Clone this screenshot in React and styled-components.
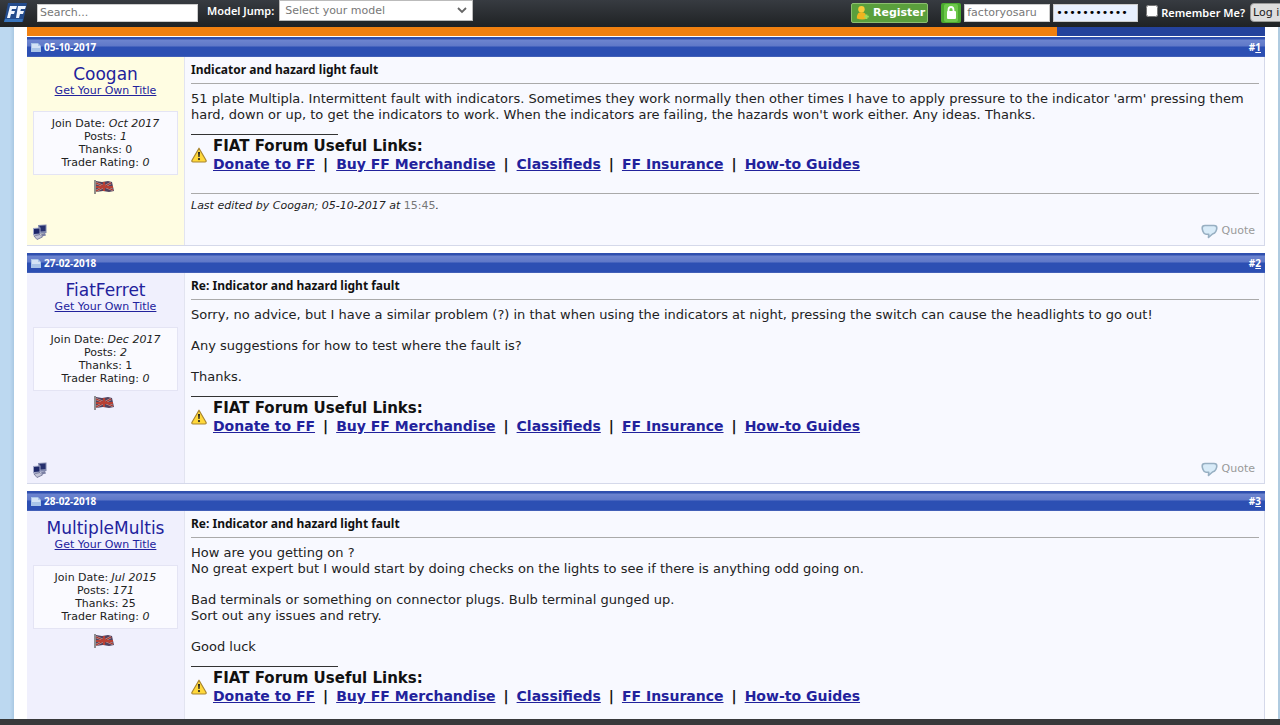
import React from "react";
import styled, { createGlobalStyle } from "styled-components";

const Global = createGlobalStyle`
  * { box-sizing: border-box; }
  body {
    margin: 0;
    background: #fff;
    color: #222;
    font: 13px/16px Verdana, "DejaVu Sans", sans-serif;
  }
  a { color: #22229c; }
`;

const Page = styled.div`
  display: flex;
  flex-direction: column;
  height: 100vh;
  overflow: hidden;
`;

const TopBar = styled.header`
  flex: none;
  display: flex;
  align-items: center;
  height: 27px;
  padding: 0 0 2px 4px;
  overflow: hidden;
  white-space: nowrap;
  background: linear-gradient(#373b41, #1f2224);
  color: #fff;
  font-size: 11px;
`;

const Logo = styled.a`
  display: block;
  width: 24px;
  height: 20px;
  margin-right: 9px;
`;

const TextBox = styled.input`
  flex: none;
  width: ${(p) => p.$width};
  height: 18px;
  border: 1px solid #ccc;
  padding: 0 2px;
  background: ${(p) => p.$fill || "#fff"};
  color: ${(p) => p.$ink || "#777"};
  font: 11px "DejaVu Sans", sans-serif;
  &::placeholder { color: #777; opacity: 1; }
`;

const BarLabel = styled.label`
  margin: 0 5px 3px 9px;
  font: 600 11px/16px "Noto Sans", sans-serif;
`;

const ModelField = styled.span`
  position: relative;
  display: flex;
  align-self: flex-start;
`;

const ModelSelect = styled.select`
  appearance: none;
  width: 194px;
  height: 21px;
  border: 1px solid #bbb;
  border-radius: 0;
  padding: 0 5px;
  background: #fff;
  color: #777;
  font: 11px "DejaVu Sans", sans-serif;
`;

const Chevron = styled.svg`
  position: absolute;
  right: 6px;
  top: 7px;
  pointer-events: none;
`;

const Account = styled.form`
  flex: none;
  display: flex;
  align-items: center;
  margin-left: auto;
  margin-right: -16px;
`;

const Credentials = styled.div`
  display: flex;
  gap: 3px;
`;

const Register = styled.button`
  display: flex;
  align-items: center;
  gap: 3px;
  width: 77px;
  height: 20px;
  margin-right: 13px;
  padding: 0 2px 0 3px;
  border: 1px solid #8cbf70;
  border-radius: 2px;
  background: #5a9f3c;
  color: #fff;
  font: bold 11px "DejaVu Sans", sans-serif;
`;

const Lock = styled.svg`
  margin-right: 3px;
`;

const Remember = styled.label`
  display: flex;
  align-items: center;
  gap: 3px;
  margin: 0 5px 0 8px;
  font: 600 11px/16px "Noto Sans", sans-serif;
  input { width: 12px; height: 12px; margin: 0 0 4px; }
`;

const LogIn = styled.button`
  width: 46px;
  height: 19px;
  padding: 0 2px;
  border: 1px solid #999;
  border-radius: 4px;
  background: #ddd;
  color: #222;
  font: 11px "DejaVu Sans", sans-serif;
  text-align: left;
`;

const Backdrop = styled.div`
  flex: 1;
  min-height: 0;
  overflow: hidden;
  display: flex;
  padding: 0 2px 0 14px;
  background: linear-gradient(90deg, #bcd8f0 0, #bcd8f0 10px, #a9c8e2 14px, #b0cbe0 100%);
`;

const Sheet = styled.main`
  flex: 1;
  padding: 0 13px;
  background: #fff;
`;

const Strip = styled.div`
  display: flex;
  height: 9px;
  margin-bottom: 1px;
  background: #24429c;
  &::before { content: ""; width: 83.2%; background: #f08010; }
`;

const PostBox = styled.article`
  margin-bottom: 7px;
`;

const PostHead = styled.header`
  display: flex;
  align-items: center;
  justify-content: space-between;
  height: 20px;
  padding: 0 4px;
  background: linear-gradient(#2f4fae 0, #2f4fae 2px, #6c84cf 3px, #5f78c8 9px, #2c4fb3 10px, #2c4fb3 19px, #5870bc 20px);
  color: #fff;
  font: bold 10px/16px "Noto Sans", sans-serif;
  a { color: #fff; }
`;

const Stamp = styled.span`
  display: flex;
  align-items: center;
  gap: 3px;
`;

const PostGrid = styled.div`
  display: grid;
  grid-template-columns: 158px 1fr;
  border: solid #d5d9ea;
  border-width: 0 1px 1px 0;
`;

const Author = styled.aside`
  display: flex;
  flex-direction: column;
  align-items: center;
  padding: 8px 6px 5px;
  background: ${(p) => (p.$starter ? "#fffde2" : "#f0f0fd")};
  border-right: 1px solid #e2e4f0;
  font-size: 11px;
  line-height: 13px;
`;

const AuthorName = styled.a`
  font-size: 17px;
  line-height: 19px;
  text-decoration: none;
`;

const Stats = styled.div`
  align-self: stretch;
  margin: 14px 0 5px;
  padding: 5px 0;
  border: 1px solid #e4e4f4;
  background: #fafaff;
  text-align: center;
`;

const FlagArt = styled.svg`
  margin-right: 3px;
`;

const Status = styled.svg`
  align-self: flex-start;
  margin-top: auto;
`;

const Body = styled.div`
  display: flex;
  flex-direction: column;
  padding: 5px 5px 0 6px;
  background: #f8f9ff;
`;

const Subject = styled.h2`
  margin: 0 0 7px;
  padding-bottom: 5px;
  border-bottom: 1px solid #aaa;
  font: bold 12px/16px "Noto Sans", sans-serif;
  color: #111;
`;

const Para = styled.p`
  margin: 0 0 15px;
  &:last-of-type { margin: 0; }
`;

const Signature = styled.div`
  display: flex;
  align-items: center;
  gap: 6px;
  margin-bottom: 20px;
  font: bold 14px/18px "DejaVu Sans", sans-serif;
  color: #111;
`;

const SigTitle = styled.div`
  font-size: 15px;
`;

const SigLinks = styled.div`
  display: flex;
  gap: 8px;
`;

const SigRule = styled.div`
  width: 147px;
  margin: 11px 0 2px;
  border-top: 1px solid #333;
`;

const Edited = styled.div`
  padding: 5px 0 2px;
  margin-bottom: 2px;
  border-top: 1px solid #aaa;
  font: italic 11px/14px "DejaVu Sans", sans-serif;
  span { color: #777; font-style: normal; }
`;

const Actions = styled.div`
  display: flex;
  justify-content: flex-end;
  align-items: center;
  height: 28px;
  padding-right: 4px;
`;

const Quote = styled.a`
  display: flex;
  align-items: center;
  gap: 4px;
  color: #999;
  font-size: 11px;
  text-decoration: none;
`;

const BottomEdge = styled.footer`
  flex: none;
  height: 6px;
  background: #38393b;
`;

const PageIcon = () => (
  <svg width="10" height="10" viewBox="0 0 10 10">
    <path d="M0 1h7l3 3v6H0z" fill="#a9c4e8" />
    <path d="M1 2h6v2h2v2H1z" fill="#d3e2f5" />
  </svg>
);

const Flag = () => (
  <FlagArt width="21" height="14" viewBox="0 0 21 14">
    <path d="M2 1l6 1 6-1 4 1 2 9-5 1-6-1-7 1z" fill="#51425f" />
    <path d="M2 3l17 7M2 11l15-8" stroke="#c9a5a0" strokeWidth="2" />
    <path d="M2 3l17 7M2 11l15-8" stroke="#a8352e" strokeWidth="1.2" />
    <path d="M2 7h17M10 2v9" stroke="#b84034" strokeWidth="2.2" />
    <path d="M1 0v14" stroke="#777" strokeWidth="1.6" />
  </FlagArt>
);

const Offline = () => (
  <Status width="14" height="16" viewBox="0 0 14 16">
    <path d="M5 1l8.500-.5v8.500L6 10z" fill="#8088ad" />
    <path d="M6.500 2l6-.5v5.500l-5.500.5z" fill="#26306e" />
    <path d="M0 4l7.500-.5v7L0 11.500z" fill="#a0a6c6" />
    <path d="M1 5l5.500-.5v5L1 10z" fill="#1d2768" />
    <path d="M8 10l4-1 1 2.500-4 1z" fill="#7b80a4" />
    <path d="M1 12l6-1.500L9.500 13 4 15.500z" fill="#c2c4d6" stroke="#686c90" strokeWidth=".8" />
  </Status>
);

const Warning = () => (
  <svg width="16" height="16" viewBox="0 0 16 16">
    <path d="M8 1.200L15 13.200Q15.600 15 14 15H2Q.4 15 1 13.200z" fill="#ffd83a" stroke="#a98630" strokeWidth="1.200" strokeLinejoin="round" />
    <path d="M7 5h2l-.4 5H7.400z" fill="#222" />
    <circle cx="8" cy="12.100" r="1.100" fill="#222" />
  </svg>
);

const Bubble = () => (
  <svg width="17" height="15" viewBox="0 0 17 15">
    <path d="M4 1.500h9q2.800 0 2.800 2.500 0 1.500-1 3.500T11.500 10L7.500 13.500l.2-3.200H5Q3 10.200 2 7.500 1.200 5.500 1.200 4 1.200 1.500 4 1.500z" fill="#d8ebf8" stroke="#97afc2" strokeWidth="1.600" strokeLinejoin="round" />
  </svg>
);

const posts = [
  {
    n: 1, date: "05-10-2017", user: "Coogan", joined: "Oct 2017", count: 1, thanks: 0, starter: true,
    subject: "Indicator and hazard light fault",
    text: [["51 plate Multipla. Intermittent fault with indicators. Sometimes they work normally then other times I have to apply pressure to the indicator 'arm' pressing them hard, down or up, to get the indicators to work. When the indicators are failing, the hazards won't work either. Any ideas. Thanks."]],
    edited: "15:45",
  },
  {
    n: 2, date: "27-02-2018", user: "FiatFerret", joined: "Dec 2017", count: 2, thanks: 1,
    subject: "Re: Indicator and hazard light fault",
    text: [
      ["Sorry, no advice, but I have a similar problem (?) in that when using the indicators at night, pressing the switch can cause the headlights to go out!"],
      ["Any suggestions for how to test where the fault is?"],
      ["Thanks."],
    ],
  },
  {
    n: 3, date: "28-02-2018", user: "MultipleMultis", joined: "Jul 2015", count: 171, thanks: 25,
    subject: "Re: Indicator and hazard light fault",
    text: [
      ["How are you getting on ?", "No great expert but I would start by doing checks on the lights to see if there is anything odd going on."],
      ["Bad terminals or something on connector plugs. Bulb terminal gunged up.", "Sort out any issues and retry."],
      ["Good luck"],
    ],
  },
];

const links = ["Donate to FF", "Buy FF Merchandise", "Classifieds", "FF Insurance", "How-to Guides"];

const Post = ({ post }) => (
  <PostBox>
    <PostHead>
      <Stamp><PageIcon />{post.date}</Stamp>
      <span>#<a href="#post">{post.n}</a></span>
    </PostHead>
    <PostGrid>
      <Author $starter={post.starter}>
        <AuthorName href="#user">{post.user}</AuthorName>
        <a href="#title">Get Your Own Title</a>
        <Stats>
          <div>Join Date: <i>{post.joined}</i></div>
          <div>Posts: <i>{post.count}</i></div>
          <div>Thanks: {post.thanks}</div>
          <div>Trader Rating: <i>0</i></div>
        </Stats>
        <Flag />
        <Offline />
      </Author>
      <Body>
        <Subject>{post.subject}</Subject>
        {post.text.map((lines, i) => (
          <Para key={i}>
            {lines.map((line, j) => (
              <React.Fragment key={j}>{j > 0 && <br />}{line}</React.Fragment>
            ))}
          </Para>
        ))}
        <SigRule />
        <Signature>
          <Warning />
          <div>
            <SigTitle>FIAT Forum Useful Links:</SigTitle>
            <SigLinks>
              {links.map((l, i) => (
                <React.Fragment key={l}>{i > 0 && <span>|</span>}<a href="#link">{l}</a></React.Fragment>
              ))}
            </SigLinks>
          </div>
        </Signature>
        {post.edited && (
          <Edited>Last edited by {post.user}; {post.date} at <span>{post.edited}</span>.</Edited>
        )}
        <Actions><Quote href="#quote"><Bubble />Quote</Quote></Actions>
      </Body>
    </PostGrid>
  </PostBox>
);

export default function App() {
  return (
    <Page>
      <Global />
      <TopBar>
        <Logo href="#home" aria-label="Home">
          <svg width="24" height="20" viewBox="0 0 24 20">
            <path d="M4 0h19l-4 19H0z" fill="#234b8c" />
            <path d="M1 16h18l-1 3H0z" fill="#3975bd" />
            <path d="M6 3h7l-1 3H8l-.6 2H11l-1 3H7l-1 4H3zM14 3h8l-1 3h-4l-.6 2H20l-1 3h-3l-1 4h-3z" fill="#f1f6ff" />
          </svg>
        </Logo>
        <TextBox $width="161px" placeholder="Search..." aria-label="Search" />
        <BarLabel htmlFor="model">Model Jump:</BarLabel>
        <ModelField>
          <ModelSelect id="model"><option>Select your model</option></ModelSelect>
          <Chevron width="10" height="7" viewBox="0 0 10 7">
            <path d="M1 1l4 4 4-4" fill="none" stroke="#666" strokeWidth="1.800" />
          </Chevron>
        </ModelField>
        <Account>
          <Register type="button">
            <svg width="16" height="16" viewBox="0 0 16 16">
              <circle cx="7" cy="4" r="3.500" fill="#f8c93a" />
              <path d="M2 14q0-7 5-7t6 7q-5 2-11 0z" fill="#f0b420" />
              <path d="M10 12h5M12.500 9.500v5" stroke="#9bdc5b" strokeWidth="2" />
            </svg>
            Register
          </Register>
          <Lock width="20" height="20" viewBox="0 0 20 20">
            <rect width="20" height="20" rx="2" fill="#4aa92e" />
            <rect x="3" y="1" width="14" height="18" rx="2" fill="#6cc84a" />
            <path d="M7.500 9V7q0-3 2.500-3t2.500 3v2" fill="none" stroke="#fff" strokeWidth="1.800" />
            <rect x="6" y="8" width="9" height="8" rx="1" fill="#fff" />
          </Lock>
          <Credentials>
            <TextBox $width="86px" defaultValue="factoryosaru" aria-label="User name" />
            <TextBox $width="85px" $fill="#e8f0fe" $ink="#000" type="password" defaultValue="abcdefghijk" aria-label="Password" />
          </Credentials>
          <Remember><input type="checkbox" />Remember Me?</Remember>
          <LogIn type="button">Log in</LogIn>
        </Account>
      </TopBar>
      <Backdrop>
        <Sheet>
          <Strip />
          {posts.map((p) => <Post key={p.n} post={p} />)}
        </Sheet>
      </Backdrop>
      <BottomEdge />
    </Page>
  );
}
